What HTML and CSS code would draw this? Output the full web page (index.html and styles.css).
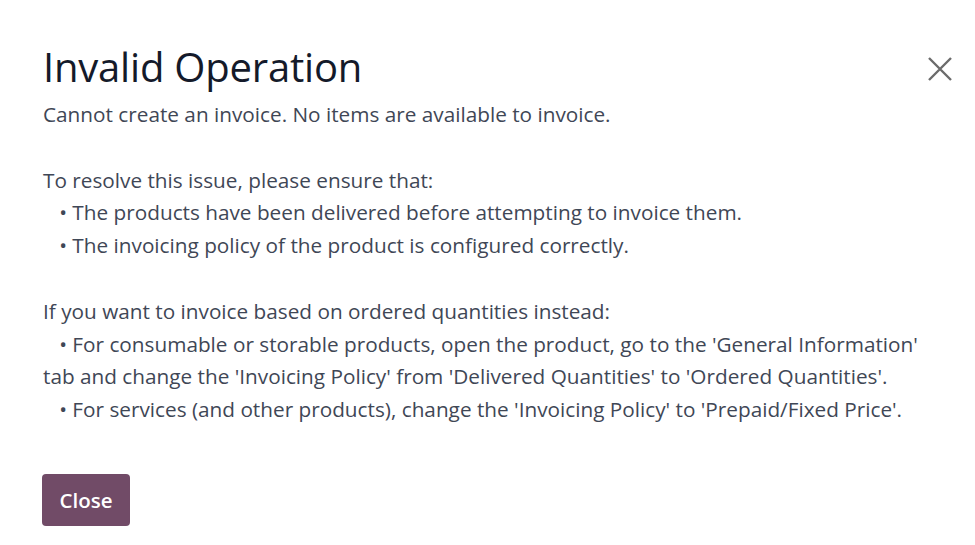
FILE: index.html
```html
<!DOCTYPE html>
<html>
<head>
<meta charset="utf-8">
<link rel="stylesheet" href="styles.css">
</head>
<body>
<div class="dialog">
  <header class="head">
    <h1 class="title">Invalid Operation</h1>
    <button class="x" aria-label="Close">
      <svg width="26" height="26" viewBox="0 0 26 26"><path d="M2 2 L24 24 M24 2 L2 24" stroke="#6b6b6b" stroke-width="2.4" fill="none"/></svg>
    </button>
  </header>
  <div class="body">Cannot create an invoice. No items are available to invoice.

To resolve this issue, please ensure that:
   • The products have been delivered before attempting to invoice them.
   • The invoicing policy of the product is configured correctly.

If you want to invoice based on ordered quantities instead:
   • For consumable or storable products, open the product, go to the 'General Information' tab and change the 'Invoicing Policy' from 'Delivered Quantities' to 'Ordered Quantities'.
   • For services (and other products), change the 'Invoicing Policy' to 'Prepaid/Fixed Price'.</div>
  <footer class="foot">
    <button class="btn">Close</button>
  </footer>
</div>
</body>
</html>
```

FILE: styles.css
```css
html, body { margin: 0; padding: 0; background: #fff; }
body { font-family: "Open Sans", "Noto Sans", sans-serif; }
.dialog { padding: 42px 22px 0 43px; width: 910px; }
.head { display: flex; justify-content: space-between; align-items: flex-start; }
.title { margin: 0; font-weight: 400; font-size: 40px; line-height: 50px; color: #141a2a; letter-spacing: -0.2px; }
.x { background: none; border: 0; padding: 0; margin-top: 14px; margin-right: 0; }
.body { white-space: pre-wrap; font-size: 20.75px; line-height: 32.8px; color: #3f4756; width: 895px; margin-top: 6px; }
.foot { margin-top: 48px; }
.btn { background: #714b67; color: #fff; border: 0; border-radius: 4px; font-family: inherit; font-size: 20.5px; font-weight: 600; width: 88px; height: 52px; margin-left: -1px; }
```
